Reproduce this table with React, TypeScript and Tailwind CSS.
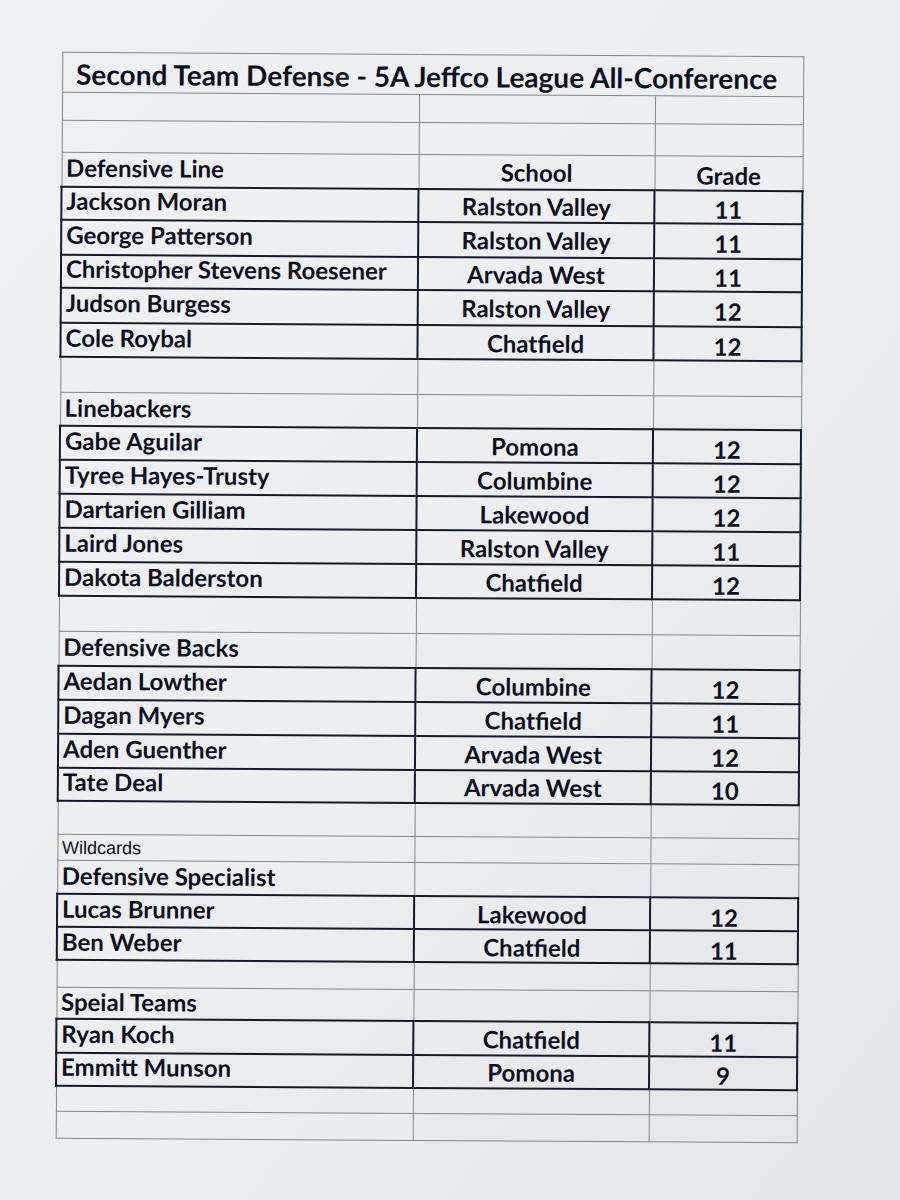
type Player = { name: string; school: string; grade: string };
type Row =
  | { kind: 'blank'; h: number }
  | { kind: 'section'; label: string; h: number; header?: boolean; plain?: boolean }
  | { kind: 'player'; p: Player; h: number };

const p = (name: string, school: string, grade: string, h = 33.5): Row => ({
  kind: 'player',
  p: { name, school, grade },
  h,
});

const rows: Row[] = [
  { kind: 'blank', h: 28 },
  { kind: 'blank', h: 32 },
  { kind: 'section', label: 'Defensive Line', h: 34, header: true },
  p('Jackson Moran', 'Ralston Valley', '11'),
  p('George Patterson', 'Ralston Valley', '11', 34.5),
  p('Christopher Stevens Roesener', 'Arvada West', '11'),
  p('Judson Burgess', 'Ralston Valley', '12', 34.5),
  p('Cole Roybal', 'Chatfield', '12', 34.5),
  { kind: 'blank', h: 35 },
  { kind: 'section', label: 'Linebackers', h: 34 },
  p('Gabe Aguilar', 'Pomona', '12'),
  p('Tyree Hayes-Trusty', 'Columbine', '12', 34.5),
  p('Dartarien Gilliam', 'Lakewood', '12', 34),
  p('Laird Jones', 'Ralston Valley', '11', 34),
  p('Dakota Balderston', 'Chatfield', '12', 34),
  { kind: 'blank', h: 35 },
  { kind: 'section', label: 'Defensive Backs', h: 35 },
  p('Aedan Lowther', 'Columbine', '12', 34),
  p('Dagan Myers', 'Chatfield', '11', 34),
  p('Aden Guenther', 'Arvada West', '12', 33.5),
  p('Tate Deal', 'Arvada West', '10', 33.5),
  { kind: 'blank', h: 33 },
  { kind: 'section', label: 'Wildcards', h: 26, plain: true },
  { kind: 'section', label: 'Defensive Specialist', h: 34 },
  p('Lucas Brunner', 'Lakewood', '12', 33),
  p('Ben Weber', 'Chatfield', '11', 33),
  { kind: 'blank', h: 27 },
  { kind: 'section', label: 'Speial Teams', h: 32 },
  p('Ryan Koch', 'Chatfield', '11'),
  p('Emmitt Munson', 'Pomona', '9', 33),
  { kind: 'blank', h: 26 },
  { kind: 'blank', h: 27 },
];

const thin = 'border border-[#7f888e]';
const thick = 'border-2 border-[#151a2e]';

export default function App() {
  return (
    <div
      className="w-[900px] h-[1200px] overflow-hidden bg-gradient-to-br from-[#eef0f1] via-[#eceeef] to-[#e3e6e8] text-[#0d1024]"
      style={{ fontFamily: 'Lato, "Open Sans", sans-serif' }}
    >
      <div className="pt-[54px] pl-[58px]">
        <table className="border-collapse table-fixed w-[741px] rotate-[0.35deg]">
          <colgroup>
            <col className="w-[357px]" />
            <col className="w-[236px]" />
            <col className="w-[148px]" />
          </colgroup>
          <tbody>
            <tr className="h-[40px]">
              <td colSpan={3} className={`${thin} text-center font-bold text-[28px] leading-none pt-0.5 pr-3`}>
                Second Team Defense - 5A Jeffco League All-Conference
              </td>
            </tr>
            {rows.map((r, i) => {
              if (r.kind === 'blank') {
                return (
                  <tr key={i} style={{ height: r.h }}>
                    <td className={thin} />
                    <td className={thin} />
                    <td className={thin} />
                  </tr>
                );
              }
              if (r.kind === 'section') {
                return (
                  <tr key={i} style={{ height: r.h }}>
                    <td
                      className={`${thin} pl-1 leading-none ${
                        r.plain ? 'font-normal text-[18px] pt-0.5' : 'font-bold text-[24px] pb-0.5'
                      }`}
                      style={r.plain ? { fontFamily: '"Liberation Sans", Arial, sans-serif' } : undefined}
                    >
                      {r.label}
                    </td>
                    <td className={`${thin} text-center font-bold text-[24px] leading-none pt-0.5`}>
                      {r.header ? 'School' : ''}
                    </td>
                    <td className={`${thin} text-center font-bold text-[24px] leading-none pt-1.5`}>
                      {r.header ? 'Grade' : ''}
                    </td>
                  </tr>
                );
              }
              return (
                <tr key={i} style={{ height: r.h }}>
                  <td className={`${thick} pl-1 font-bold text-[24px] leading-none pb-1`}>{r.p.name}</td>
                  <td className={`${thick} text-center font-bold text-[24px] leading-none pt-0.5`}>{r.p.school}</td>
                  <td className={`${thick} text-center font-bold text-[24px] leading-none pt-1.5`}>{r.p.grade}</td>
                </tr>
              );
            })}
          </tbody>
        </table>
      </div>
    </div>
  );
}
